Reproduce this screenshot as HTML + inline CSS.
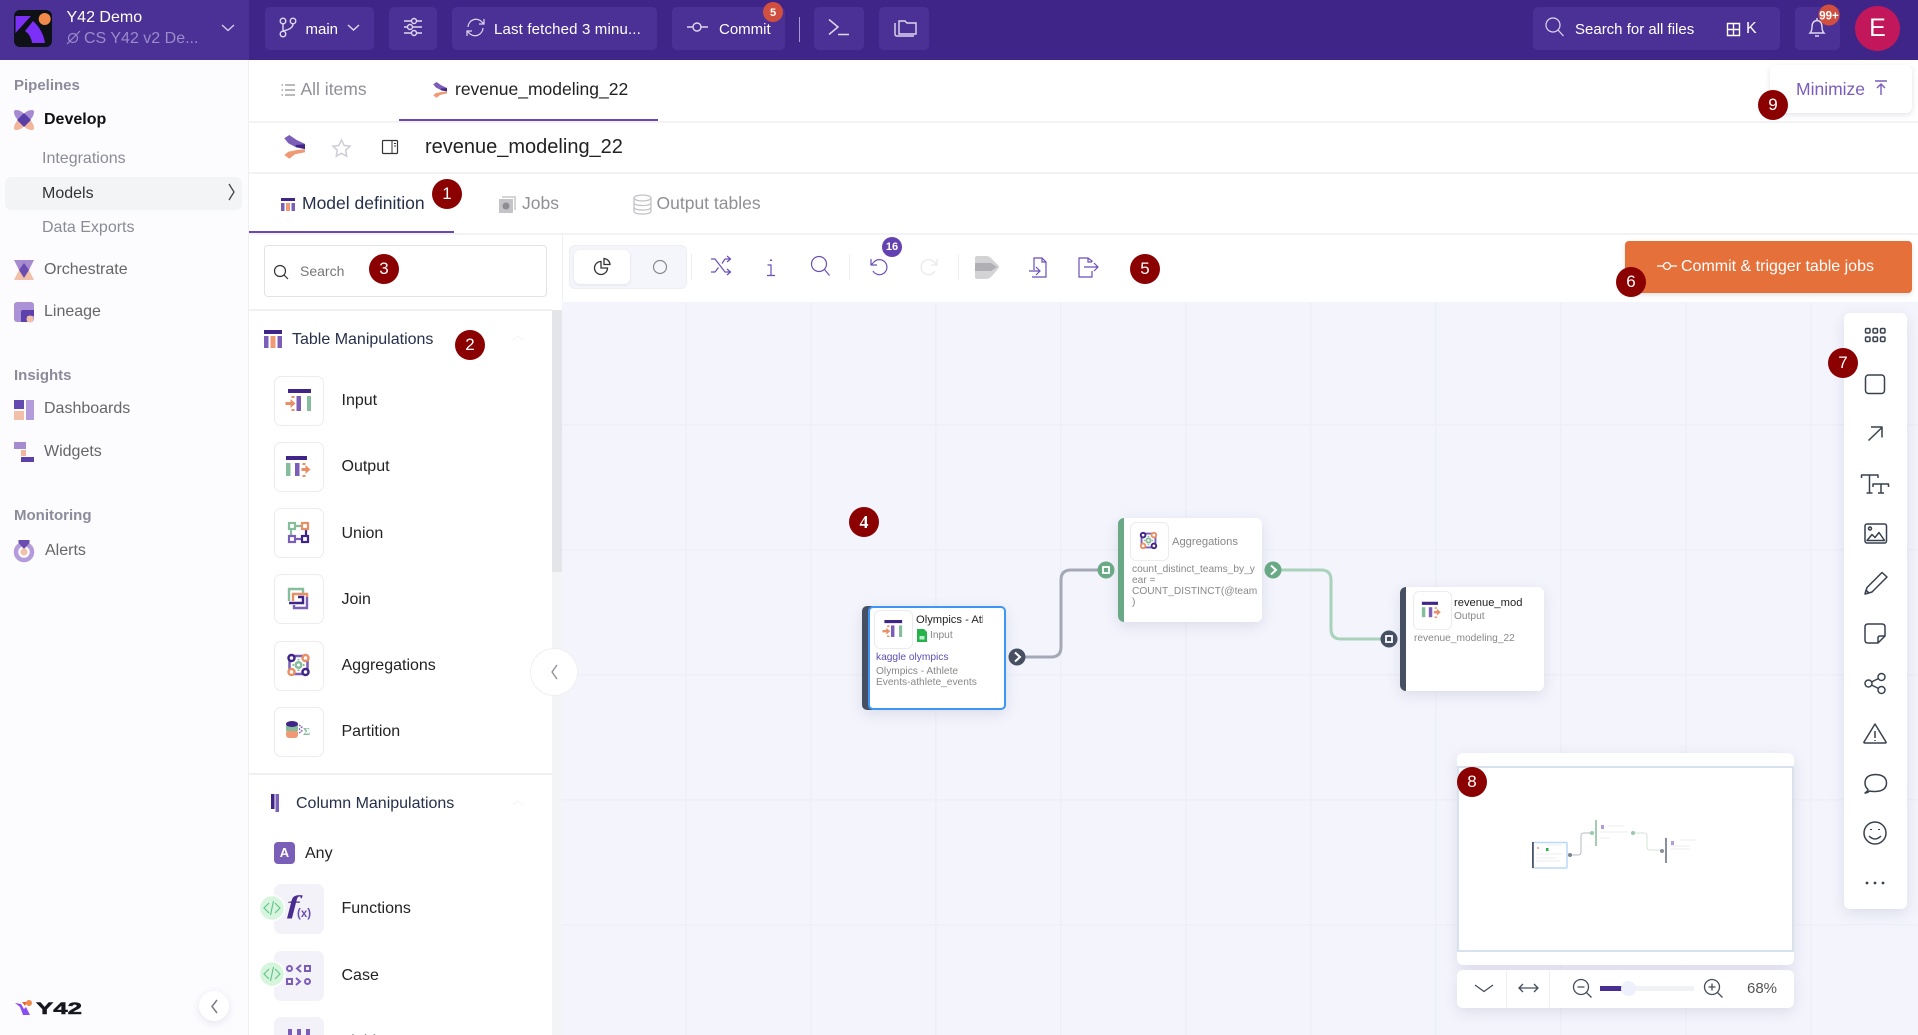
<!DOCTYPE html>
<html lang="en"><head><meta charset="utf-8"><title>Y42</title>
<style>
html,body{margin:0;padding:0;width:1918px;height:1035px;overflow:hidden;background:#fff;font-family:"Liberation Sans",sans-serif;color:#222}
#w{position:absolute;left:0;top:0;width:1918px;height:1035px;overflow:hidden;contain:paint}
.a{position:absolute;box-sizing:border-box}
.t{position:absolute;white-space:nowrap;line-height:20px;height:20px}
.btn{position:absolute;top:7px;height:43px;background:#4b3196;border-radius:5px}
.box{position:absolute;left:274px;width:48px;height:48px;border:1px solid #ececf0;border-radius:7px;background:#fff}
.n{position:absolute;width:30px;height:30px;border-radius:50%;background:#8b0000;color:#fff;font:17px/30px "Liberation Sans",sans-serif;text-align:center;z-index:9}
.s15{font-size:15px;color:#fff}
.s16{font-size:16px}
.g{color:#8b8b95}
.card{position:absolute;background:#fff;border-radius:6px;box-shadow:0 4px 14px rgba(60,60,110,.12)}
.nt{position:absolute;white-space:nowrap;font-size:10.2px;line-height:11px;color:#888}
.ib{position:absolute;width:37px;height:37px;border:1px solid #ececf0;border-radius:6px;background:#fff}
</style></head><body><div id="w">
<!-- top bar -->
<div class="a" style="left:0;top:0;width:1918px;height:60px;background:#3f2587"></div>
<div class="a" style="left:0;top:0;width:249px;height:60px;background:#4b3196"></div>
<div class="btn" style="left:265px;width:109px"></div>
<div class="btn" style="left:389px;width:48px"></div>
<div class="btn" style="left:452px;width:205px"></div>
<div class="btn" style="left:672px;width:113px"></div>
<div class="a" style="left:799px;top:17px;width:1px;height:25px;background:#a99bd2"></div>
<div class="btn" style="left:814px;width:50px"></div>
<div class="btn" style="left:879px;width:50px"></div>
<div class="btn" style="left:1533px;width:247px"></div>
<div class="btn" style="left:1795px;width:45px"></div>
<div class="a" style="left:1855px;top:6px;width:45px;height:45px;border-radius:50%;background:#c2185b;color:#fff;font-size:25px;line-height:45px;text-align:center">E</div>
<div class="t s16" style="left:66.5px;top:8px;color:#fff">Y42 Demo</div>
<div class="t s16" style="left:84px;top:29px;color:#9a8bca">CS Y42 v2 De...</div>
<div class="t s15" style="left:305.5px;top:20px">main</div>
<div class="t s15" style="left:494px;top:20px;letter-spacing:.16px">Last fetched 3 minu...</div>
<div class="t s15" style="left:719px;top:20px">Commit</div>
<div class="t s15" style="left:1575px;top:20px">Search for all files</div>
<div class="t s16" style="left:1746px;top:19px;color:#fff">K</div>
<!-- sidebar -->
<div class="a" style="left:0;top:60px;width:249px;height:975px;background:#fcfcff;border-right:1px solid #f0f0f4"></div>
<div class="a" style="left:5px;top:177px;width:237px;height:33px;background:#f3f4f6;border-radius:6px"></div>
<div class="t" style="left:14px;top:76px;font-size:15px;font-weight:700;color:#8b8b9b">Pipelines</div>
<div class="t s16" style="left:44px;top:110px;font-weight:700;color:#111">Develop</div>
<div class="t s16 g" style="left:42px;top:149px">Integrations</div>
<div class="t s16" style="left:42px;top:184px;color:#333">Models</div>
<div class="t s16 g" style="left:42px;top:218px">Data Exports</div>
<div class="t s16" style="left:44px;top:260px;color:#666">Orchestrate</div>
<div class="t s16" style="left:44px;top:302px;color:#666">Lineage</div>
<div class="t" style="left:14px;top:366px;font-size:15px;font-weight:700;color:#8b8b9b">Insights</div>
<div class="t s16" style="left:44px;top:399px;color:#666">Dashboards</div>
<div class="t s16" style="left:44px;top:442px;color:#666">Widgets</div>
<div class="t" style="left:14px;top:506px;font-size:15px;font-weight:700;color:#8b8b9b">Monitoring</div>
<div class="t s16" style="left:45px;top:541px;color:#666">Alerts</div>
<div class="a" style="left:199px;top:991px;width:30px;height:30px;border-radius:50%;background:#fff;box-shadow:0 2px 8px rgba(60,60,110,.12)"></div>
<!-- tabs rows -->
<div class="a" style="left:249px;top:121px;width:1669px;height:2px;background:#f3f3f6"></div>
<div class="a" style="left:249px;top:172px;width:1669px;height:2px;background:#f3f3f6"></div>
<div class="a" style="left:249px;top:233px;width:1669px;height:2px;background:#f3f3f6"></div>
<div class="a" style="left:399px;top:119px;width:259px;height:2px;background:#6b46b5"></div>
<div class="a" style="left:249px;top:231px;width:205px;height:2px;background:#6b46b5"></div>
<div class="t" style="left:300.5px;top:79px;font-size:17.5px;color:#8f8f98">All items</div>
<div class="t" style="left:455px;top:79px;font-size:17.5px;color:#222">revenue_modeling_22</div>
<div class="t" style="left:425px;top:137px;font-size:20px;color:#222">revenue_modeling_22</div>
<div class="t" style="left:302px;top:193px;font-size:17.5px;color:#27304a">Model definition</div>
<div class="t" style="left:522px;top:193px;font-size:17.5px;color:#8f8f95">Jobs</div>
<div class="t" style="left:656.500px;top:193px;font-size:17.5px;color:#8f8f95">Output tables</div>
<div class="card" style="left:1770px;top:65px;width:142px;height:48px;box-shadow:0 2px 6px rgba(60,60,110,.14)"></div>
<div class="t" style="left:1796px;top:79px;font-size:17.5px;color:#7c5cbc">Minimize</div>
<!-- canvas -->
<div class="a" style="left:562px;top:302px;width:1356px;height:733px;background-color:#f3f4fc;background-image:linear-gradient(to right,#eeeff8 1.5px,transparent 1.5px),linear-gradient(to bottom,#eeeff8 1.5px,transparent 1.5px);background-size:125px 125px;background-position:123px -3px"></div>
<!-- toolbar -->
<div class="a" style="left:562px;top:233px;width:1px;height:69px;background:#f0f0f4"></div>
<div class="a" style="left:569px;top:245px;width:118px;height:44px;background:#f5f6fb;border:1px solid #eeeff5;border-radius:6px"></div>
<div class="a" style="left:574px;top:250px;width:56px;height:34px;background:#fff;border-radius:6px;box-shadow:0 1px 3px rgba(60,60,110,.1)"></div>
<div class="a" style="left:691px;top:254px;width:1px;height:26px;background:#eee"></div>
<div class="a" style="left:849px;top:254px;width:1px;height:26px;background:#eee"></div>
<div class="a" style="left:958px;top:254px;width:1px;height:26px;background:#eee"></div>
<div class="a" style="left:882px;top:237px;width:20px;height:20px;border-radius:50%;background:#6441b0;color:#fff;font-size:11px;font-weight:700;line-height:20px;text-align:center;z-index:6">16</div>
<div class="a" style="left:1625px;top:241px;width:287px;height:52px;background:#e5703a;border-radius:4px;box-shadow:0 2px 5px rgba(60,60,60,.15)"></div>
<div class="t s16" style="left:1681px;top:257px;color:#fff">Commit &amp; trigger table jobs</div>
<!-- left panel -->
<div class="a" style="left:552px;top:310px;width:10px;height:725px;background:#f3f4f6"></div>
<div class="a" style="left:552px;top:310px;width:10px;height:262px;background:#e4e5e9"></div>
<div class="a" style="left:249px;top:309px;width:303px;height:2px;background:#f1f1f5"></div>
<div class="a" style="left:264px;top:245px;width:283px;height:52px;border:1px solid #e3e3e6;border-radius:4px;background:#fff"></div>
<div class="t" style="left:300px;top:261px;font-size:14px;color:#777">Search</div>
<div class="t s16" style="left:292px;top:330px;color:#27304a">Table Manipulations</div>
<div class="box" style="top:376px"></div><div class="t s16" style="left:341.5px;top:391px">Input</div>
<div class="box" style="top:442px"></div><div class="t s16" style="left:341.5px;top:457px">Output</div>
<div class="box" style="top:508px"></div><div class="t s16" style="left:341.5px;top:524px">Union</div>
<div class="box" style="top:574px"></div><div class="t s16" style="left:341.5px;top:590px">Join</div>
<div class="box" style="top:641px"></div><div class="t s16" style="left:341.5px;top:656px">Aggregations</div>
<div class="box" style="top:707px"></div><div class="t s16" style="left:341.5px;top:722px">Partition</div>
<div class="a" style="left:249px;top:773px;width:303px;height:2px;background:#f0f0f4"></div>
<div class="t s16" style="left:296px;top:794px;color:#27304a">Column Manipulations</div>
<div class="a" style="left:274px;top:842px;width:21px;height:22px;border-radius:4px;background:#7b5eb8;color:#fff;font-size:13px;font-weight:700;line-height:22px;text-align:center">A</div>
<div class="t s16" style="left:305px;top:844px">Any</div>
<div class="box" style="top:884px;background:#f4f2f9;border-color:#f4f2f9"></div><div class="t s16" style="left:341.5px;top:899px">Functions</div>
<div class="box" style="top:951px;background:#f4f2f9;border-color:#f4f2f9"></div><div class="t s16" style="left:341.5px;top:966px">Case</div>
<div class="box" style="top:1017px;background:#f4f2f9;border-color:#f4f2f9"></div><div class="t s16" style="left:341.5px;top:1032px">Fields</div>
<div class="a" style="left:530px;top:648px;width:48px;height:48px;border-radius:50%;background:#fff;border:1px solid #f0f0f4;z-index:2"></div>
<!-- nodes -->
<div class="card" style="left:862px;top:606px;width:144px;height:104px"></div>
<div class="a" style="left:862px;top:606px;width:10px;height:104px;background:#475063;border-radius:5px 0 0 5px"></div>
<div class="a" style="left:868px;top:606px;width:138px;height:104px;border:2px solid #3d95f5;border-radius:5px;background:#fff"></div>
<div class="ib" style="left:874px;top:610px"></div>
<div class="a" style="left:916px;top:613px;width:67px;height:15px;overflow:hidden;white-space:nowrap;font-size:11.2px;line-height:15px;color:#222">Olympics - Athlete Events</div>
<div class="nt" style="left:930px;top:630px;color:#888">Input</div>
<div class="nt" style="left:876px;top:652px;color:#5b4fb0">kaggle olympics</div>
<div class="nt" style="left:876px;top:666px">Olympics - Athlete</div>
<div class="nt" style="left:876px;top:677px">Events-athlete_events</div>
<div class="card" style="left:1118px;top:518px;width:144px;height:104px;overflow:hidden"><div class="a" style="left:0;top:0;width:6px;height:104px;background:#6aa985"></div></div>
<div class="ib" style="left:1130px;top:522px"></div>
<div class="t" style="left:1172px;top:532px;font-size:11.2px;color:#888">Aggregations</div>
<div class="nt" style="left:1132px;top:564px">count_distinct_teams_by_y</div>
<div class="nt" style="left:1132px;top:575px">ear =</div>
<div class="nt" style="left:1132px;top:586px">COUNT_DISTINCT(@team</div>
<div class="nt" style="left:1132px;top:597px">)</div>
<div class="card" style="left:1400px;top:587px;width:144px;height:104px;overflow:hidden"><div class="a" style="left:0;top:0;width:6px;height:104px;background:#475063"></div></div>
<div class="ib" style="left:1413px;top:591px"></div>
<div class="a" style="left:1454px;top:596px;width:68px;height:15px;overflow:hidden;white-space:nowrap;font-size:11.2px;line-height:15px;color:#222">revenue_modeling_22</div>
<div class="nt" style="left:1454px;top:611px">Output</div>
<div class="nt" style="left:1414px;top:633px">revenue_modeling_22</div>
<!-- minimap -->
<div class="card" style="left:1457px;top:753px;width:337px;height:212px"></div>
<div class="a" style="left:1457px;top:766px;width:337px;height:186px;border:2px solid #d8e2ec;background:#fff"></div>
<div class="card" style="left:1457px;top:970px;width:337px;height:38px"></div>
<div class="a" style="left:1506px;top:970px;width:1px;height:38px;background:#f0f0f4"></div>
<div class="a" style="left:1549px;top:970px;width:1px;height:38px;background:#f0f0f4"></div>
<div class="a" style="left:1600px;top:986px;width:94px;height:5px;background:#f1f2f6"></div>
<div class="a" style="left:1600px;top:986px;width:22px;height:5px;background:#4a2d90"></div>
<div class="a" style="left:1621px;top:981px;width:15px;height:15px;border-radius:50%;background:#eef0fb"></div>
<div class="t" style="left:1747px;top:979px;font-size:15px;color:#555">68%</div>
<!-- right toolbar -->
<div class="card" style="left:1844px;top:313px;width:63px;height:596px"></div>

<svg class="a" style="left:0;top:0;z-index:5" width="1918" height="1035" viewBox="0 0 1918 1035" fill="none">
<defs>
<symbol id="in" viewBox="0 0 48 48"><path fill="#3f2587" d="M13.500 13h23v4h-23z"/><path fill="#7b5eb8" d="M22 20h4.500v15H22z"/><path fill="#86bd9c" d="M32.500 20h4v15h-4z"/><path fill="#e98f66" d="M11 26h5v-3l5 4.500-5 4.500v-3h-5zM17 20h3v2h-3zM17 33h3v2h-3z"/></symbol>
<symbol id="out" viewBox="0 0 48 48"><path fill="#3f2587" d="M11.500 14h21v4h-21z"/><path fill="#86bd9c" d="M11.500 21H16v13h-4.500z"/><path fill="#7b5eb8" d="M20.500 21H25v13h-4.500z"/><path fill="#e98f66" d="M27 26h4v-3l5 4.500-5 4.500v-3h-4zM28 21h3v2h-3zM28 33h3v2h-3z"/></symbol>
<symbol id="agg" viewBox="0 0 48 48"><rect x="15" y="15" width="18" height="18" rx="4" stroke="#7b5eb8" stroke-width="2.500"/><circle cx="24" cy="24" r="2.800" stroke="#86bd9c" stroke-width="2.500"/><path d="M24 18v1.500M24 28.500V30M18 24h1.500M28.500 24H30" stroke="#86bd9c" stroke-width="2"/><circle cx="17" cy="17" r="3" stroke="#3f2587" stroke-width="2.500" fill="#fff"/><circle cx="31" cy="17" r="3" stroke="#e98f66" stroke-width="2.500" fill="#fff"/><circle cx="17" cy="31" r="3" stroke="#e98f66" stroke-width="2.500" fill="#fff"/><circle cx="31" cy="31" r="3" stroke="#3f2587" stroke-width="2.500" fill="#fff"/></symbol>
<symbol id="model" viewBox="0 0 21 24"><path fill="#7b5eb8" d="M.3 3.300 5.300 0l7.400 5 8.300 4v5.300l-10-2.600-6.700-3.400z"/><path fill="#ef9a72" d="M21 14.300l-8.300.7-8.400 1.700-4 3.300 5 3.700 5.700-4.400 10-2z"/><path fill="#3f2587" d="M11.700 10 21 9.300V14l-9.300-1.700z"/></symbol>
</defs>
<!-- logo -->
<rect x="14" y="10" width="38" height="37" rx="6" fill="#0e1116"/>
<path fill="#7b2ff7" d="M15.500 16H31L15.500 33zM25 31l8-10q10 9 12 22H32q-1-8-7-12z"/>
<circle cx="44.700" cy="19" r="6" fill="#ef8a4a"/>
<g stroke="#9a8bca" stroke-width="1.200"><ellipse cx="73" cy="38" rx="4.500" ry="4.500"/><path d="M67 44 80 31" /></g>
<path d="M222 25l6 5.500 6-5.500" stroke="#d9d2ee" stroke-width="1.300"/>
<!-- branch -->
<g stroke="#ded8f0" stroke-width="1.400"><circle cx="283" cy="21" r="2.800"/><circle cx="293" cy="21" r="2.800"/><circle cx="283" cy="34" r="2.800"/><path d="M283 24v7M293 24q0 5-10 7"/>
<path d="M348 25l5.500 5 5.500-5"/>
<path d="M404 21h7M417 21h5M404 27h3M413 27h9M404 33h7M417 33h5"/><circle cx="414" cy="21" r="2.500"/><circle cx="410" cy="27" r="2.500"/><circle cx="414" cy="33" r="2.500"/>
<path d="M468 27a8 8 0 0 1 14-5l2 2M484 19v5h-5M483 28a8 8 0 0 1-14 5l-2-2M467 36v-5h5" stroke-width="1.200"/>
<path d="M687 27h6M701 27h7"/><circle cx="697" cy="27" r="4"/>
<path d="M829 19.500 838 27l-9 7.500M838 34.500h11" stroke-width="1.500"/>
<path d="M899 30V21h6l2 2h9v11h-17z"/><path d="M895 23v11q0 2 2 2h17"/>
<circle cx="1553" cy="25" r="7" stroke-width="1.200"/><path d="M1558 30l5.500 6" stroke-width="1.200"/>
<path d="M1727.500 23.500h12v12h-12zM1733.500 23.500v12M1727.500 29.500h12" stroke="#fff"/>
<path d="M1810 33h14q-2-2-2-6 0-6-5-6.500-5 .5-5 6.500 0 4-2 6zM1815 36h4M1817 18v2.500"/></g>
<circle cx="773" cy="12" r="10" fill="#d04f3e"/>
<text x="773" y="16" font-family="Liberation Sans" font-size="11" font-weight="700" fill="#fff" text-anchor="middle">5</text>
<circle cx="1829" cy="15" r="10.500" fill="#d04f3e"/>
<text x="1829" y="19.500" font-family="Liberation Sans" font-size="11.500" font-weight="700" fill="#fff" text-anchor="middle">99+</text>
<!-- sidebar icons -->
<path fill="#a78bd1" d="M14 112q0-2 2-2 5 0 8 4 3-4 8-4 2 0 2 2 0 4-4 8l-6-6-6 6q-4-4-4-8z"/>
<path fill="#f2b69a" d="M14 128q0 2 2 2 5 0 8-4 3 4 8 4 2 0 2-2 0-4-4-8l-6 6-6-6q-4 4-4 8z"/>
<path fill="#5a3ea8" d="M24 113l7 7-7 7-7-7z"/>
<path fill="#a78bd1" d="M14 260h20l-5 10H19z"/><path fill="#f2c0a8" d="M14 280h20l-5-10H19z"/><path fill="#6b4cb0" d="M24 263l5 7-5 8-5-8z"/>
<rect x="14" y="302" width="20" height="20" rx="3" fill="#ab92d6"/><path fill="#5e40ab" d="M21 322v-10q0-2 2-2h11v6h-7v6z"/><circle cx="30" cy="319" r="3.500" fill="#f2c0a8"/>
<path fill="#624ab0" d="M14 400h10v9H14z"/><path fill="#f2c0a8" d="M14 411h10v9H14z"/><path fill="#b39bdc" d="M26 400h8v20h-8z"/>
<path fill="#a78bd1" d="M14 442h12v7H14z"/><path fill="#f2b69a" d="M21 450h5v6h-5z"/><path fill="#5e40ab" d="M21 457h13v5H21z"/>
<circle cx="24" cy="552" r="8" stroke="#b39bdc" stroke-width="4.500"/><path fill="#6b4cb0" d="M18.500 540h11v3L24 549l-5.500-6z"/><circle cx="24" cy="552" r="3.500" fill="#f2c0a8"/>
<path d="M229 184l5 8-5 8" stroke="#444" stroke-width="1.300"/>
<path d="M217 1000l-5 6.500 5 6.500" stroke="#7a7a88" stroke-width="1.500"/>
<path fill="#8b4ff0" d="M15 1003l6 1 3 5 2-2 4 8h-7l-3-8z"/><path fill="#e8652a" d="M22 1002l5 0-2 4z"/><circle cx="29" cy="1003" r="3" fill="#ef8a4a"/>
<text x="36" y="1014" font-family="Liberation Sans" font-size="17" font-weight="700" fill="#17171f" stroke="#17171f" stroke-width=".5" textLength="46" lengthAdjust="spacingAndGlyphs">Y42</text>
<!-- tab icons -->
<g stroke="#8f8f98" stroke-width="1.300"><path d="M285 85h10M285 90h10M285 95h10M281.500 85h1.500M281.500 90h1.500M281.500 95h1.500"/></g>
<use href="#model" x="433" y="82" width="14" height="16"/>
<use href="#model" x="284" y="135" width="21" height="24"/>
<path d="M341.500 140l2.600 5.400 5.900.8-4.300 4.100 1 5.900-5.200-2.800-5.200 2.800 1-5.900-4.300-4.100 5.900-.8z" stroke="#cdcdd6" stroke-width="1.500"/>
<rect x="382.500" y="140.500" width="15" height="13" rx="1" stroke="#333" stroke-width="1.200"/><path d="M392 140.500v13M394 143.500h2M394 146h2" stroke="#333"/>
<path fill="#3f2587" d="M281 198h14v3h-14z"/><path fill="#7b5eb8" d="M281 203h3.500v8H281zM291.500 203h3.500v8h-3.500z"/><path fill="#ef9a72" d="M286 203h4v8h-4z"/>
<rect x="499" y="199" width="14" height="14" fill="#c4c4c8"/><path d="M502 196h14v14h-2v-12h-12z" fill="#d5d5d8"/><circle cx="506" cy="206" r="3.500" fill="#8c8c92"/>
<g stroke="#c2c2c8" stroke-width="1.300"><ellipse cx="642.500" cy="198" rx="8.500" ry="3"/><path d="M634 198v13q0 3 8.500 3t8.500-3v-13M634 202.500q0 3 8.500 3t8.500-3M634 207q0 3 8.500 3t8.500-3"/></g>
<path d="M1875 81h12M1881 95V84.500M1877 88l4-4 4 4" stroke="#7c5cbc" stroke-width="1.400"/>
<!-- search + toolbar -->
<circle cx="280" cy="271" r="5.500" stroke="#333" stroke-width="1.200"/><path d="M284 275l4 4" stroke="#333" stroke-width="1.200"/>
<g stroke="#333" stroke-width="1.300"><path d="M601 261.500A6.500 6.500 0 1 0 607.500 268H601Z"/><path d="M604 258.500A6.500 6.500 0 0 1 610 264.500H604Z"/></g>
<circle cx="660" cy="267" r="6.500" stroke="#8a8a92" stroke-width="1.200"/>
<g stroke="#6b4fb8" stroke-width="1.200">
<path d="M711 259h4l10 13h5M711 272h4l3.500-4.500M722 263.500l3-4.500h5M727 256l3.500 3-3.500 3M727 269l3.500 3-3.500 3"/>
<path d="M771 259.500v1.500" stroke-width="2"/><path d="M767.500 265h3.500v10.500M767 275.500h8"/>
<circle cx="819" cy="264" r="7.500"/><path d="M824.500 269.500l5 6"/>
<path d="M871 259v6h6M871 265L874 262A7.500 7.500 0 1 1 873 271"/>
<path d="M1032 277h14v-15l-4-4h-8v12M1042 258v4h4M1029 271h11M1036 267l4 4-4 4"/>
<path d="M1092 262v-1l-4-3h-9v19h13v-6M1088 258v4h4M1084 267h14M1094 263l4 4-4 4"/>
</g>
<path d="M871 259v6h6M871 265L874 262A7.500 7.500 0 1 1 873 271" stroke="#e9e9ee" stroke-width="1.300" transform="matrix(-1 0 0 1 1808 0)"/>
<path d="M977 256h9q3 0 5 2l7 7q2 2 0 4l-7 8q-2 2-5 2h-9q-2 0-2-2v-19q0-2 2-2z" fill="#d3d3d6"/><path d="M975 263h16l6 4-6 4h-16z" fill="#b0b0b4"/>
<path d="M1657 266h6M1671 266h6" stroke="#fff" stroke-width="1.300"/><circle cx="1667" cy="266" r="3.500" stroke="#fff" stroke-width="1.300"/>
<!-- section icons -->
<path fill="#3f2587" d="M264 330h18v4h-18z"/><path fill="#7b5eb8" d="M264 336h4.500v12H264zM277.500 336h4.500v12h-4.500z"/><path fill="#ef9a72" d="M270.500 336h5v12h-5z"/>
<path d="M513 340l5-4 5 4M513 805l5-4 5 4" stroke="#f6f6f9" stroke-width="1.300"/>
<path fill="#3f2587" d="M271 794h3.500v15H271z"/><path fill="#7b5eb8" d="M275.500 794h3.500v18h-3.500z"/>
<use href="#in" x="274.500" y="376" width="48" height="48"/>
<use href="#out" x="274.500" y="442" width="48" height="48"/>
<use href="#agg" x="274.500" y="641" width="48" height="48"/>
<!-- union -->
<g stroke-width="2.200"><path d="M291 526h15" stroke="#86bd9c"/><path d="M291 539h15" stroke="#7b5eb8"/><path d="M291 526v13" stroke="#86bd9c"/><path d="M306 526v13" stroke="#3f2587"/>
<rect x="289" y="523" width="6" height="6" stroke="#86bd9c" fill="#fff"/><rect x="302" y="523" width="6" height="6" stroke="#e98f66" fill="#fff"/><rect x="289" y="536" width="6" height="6" stroke="#7b5eb8" fill="#fff"/><rect x="302" y="536" width="6" height="6" stroke="#3f2587" fill="#fff"/></g>
<!-- join -->
<g stroke-width="2.400"><path d="M289 601v-12h14v4" stroke="#86bd9c"/><path d="M293 601v-7h14v3" stroke="#e98f66"/><path d="M289 603h14v-6h-5" stroke="#3f2587"/><path d="M307 597v11h-13v-3" stroke="#7b5eb8"/></g>
<!-- partition -->
<rect x="286" y="730" width="12" height="8" rx="3" fill="#ef9a72"/><rect x="286" y="725" width="12" height="6" fill="#86bd9c"/><ellipse cx="292" cy="724" rx="6" ry="3" fill="#3f2587"/>
<path d="M299 725l3 2-3 2M299 733l3-2-3-2" stroke="#7b5eb8" stroke-width="1.200" stroke-dasharray="2 1"/>
<text x="303" y="735" font-family="Liberation Serif" font-size="11" font-weight="700" fill="#86bd9c">Σ</text>
<!-- f(x) -->
<text transform="translate(287 913) scale(1.5 1)" font-family="Liberation Serif" font-size="25" font-weight="700" font-style="italic" fill="#4a2d90">f</text>
<text x="297" y="917" font-family="Liberation Sans" font-size="11.500" font-weight="700" fill="#6a4db0">(x)</text>
<circle cx="272" cy="908" r="12.500" fill="#d6f5dc" stroke="#fff" stroke-width="1.500"/><circle cx="272" cy="974" r="12.500" fill="#d6f5dc" stroke="#fff" stroke-width="1.500"/>
<g stroke="#5fc38a" stroke-width="1.100"><path d="M269 903l-5 5 5 5M275 903l5 5-5 5M273.500 901l-3 14M269 969l-5 5 5 5M275 969l5 5-5 5M273.500 967l-3 14"/></g>
<g stroke="#7b5eb8" stroke-width="2"><circle cx="289.500" cy="968.500" r="2.500"/><rect x="305" y="966" width="5" height="5"/><rect x="287" y="979" width="5" height="5"/><circle cx="307.500" cy="981.500" r="2.500"/><path d="M301 965l-4 3.500 4 3.500M296 978l4 3.500-4 3.500"/></g>
<path fill="#7b5eb8" d="M288 1029h4v6h-4zM297 1029h4v6h-4zM306 1029h4v6h-4z"/>
<path d="M557 665l-5 7 5 7" stroke="#8a8a95" stroke-width="1.300"/>
<!-- edges -->
<path d="M1017 657H1051Q1061 657 1061 647V580Q1061 570 1071 570H1106" stroke="#a5a9b7" stroke-width="3"/>
<path d="M1273 570H1321Q1331 570 1331 580V629Q1331 639 1341 639H1389" stroke="#aad2ba" stroke-width="3"/>
<!-- node icons -->
<use href="#in" x="874" y="610" width="37" height="37"/>
<use href="#agg" x="1130" y="522" width="37" height="37"/>
<use href="#out" x="1413" y="591" width="37" height="37"/>
<path fill="#27b34c" d="M917 629h7l3 3v10h-10z"/><path fill="#bdeccb" d="M919.500 636h5v3.500h-5z"/>
<circle cx="1017" cy="657" r="8.500" fill="#475063"/><path d="M1015 652.500l5 4.500-5 4.500" stroke="#fff" stroke-width="2"/>
<circle cx="1106" cy="570" r="8.500" fill="#6aa985"/><rect x="1103" y="567" width="6" height="6" stroke="#fff" stroke-width="1.800"/>
<circle cx="1273" cy="570" r="8.500" fill="#6aa985"/><path d="M1271 565.500l5 4.500-5 4.500" stroke="#fff" stroke-width="2"/>
<circle cx="1389" cy="639" r="8.500" fill="#475063"/><rect x="1386" y="636" width="6" height="6" stroke="#fff" stroke-width="1.800"/>
<!-- minimap content -->
<rect x="1533" y="842.500" width="34" height="25.500" rx="1" stroke="#bcd8f9" stroke-width="1.500" fill="#fff"/>
<path fill="#4a5570" d="M1532 842h1.800v26H1532z"/>
<path d="M1572 855H1578Q1581 855 1581 852V836Q1581 833 1584 833H1592" stroke="#b5b9c4"/>
<path d="M1635 833H1644Q1647 833 1647 836V847Q1647 850 1650 850H1660" stroke="#cfe5d7"/>
<circle cx="1570" cy="855" r="2" fill="#7d8290"/><circle cx="1592" cy="833" r="2" fill="#9cc7ac"/><circle cx="1633" cy="833" r="2" fill="#9cc7ac"/><circle cx="1662" cy="851" r="2" fill="#8a8f9d"/>
<path fill="#a3cdb2" d="M1595 820h2v26h-2z"/><path fill="#8a8f9d" d="M1665 838h2v25h-2z"/>
<g stroke="#eceef2" stroke-width="1"><path d="M1546 845h16M1536 854h26M1536 858h20M1536 861h24M1608 826h16M1600 832h28M1600 838h10M1680 840h16M1670 846h20M1670 849h20"/></g>
<circle cx="1538" cy="848" r="1" fill="#ef9a72"/><path fill="#27b34c" d="M1546 848h2.500v3h-2.500z"/><path fill="#b39bdc" d="M1601 825h3v4h-3zM1671 841h3v4h-3z"/>
<!-- minimap controls -->
<g stroke="#454c5e" stroke-width="1.300"><path d="M1475 985l9 6.500 9-6.500"/><path d="M1519 988h19M1523 984l-4 4 4 4M1534 984l4 4-4 4"/>
<circle cx="1581" cy="987" r="7.500"/><path d="M1577.500 987h7M1586.500 992.500l5 5"/>
<circle cx="1712" cy="987" r="7.500"/><path d="M1708.500 987h7M1712 983.500v7M1717.500 992.500l5 5"/></g>
<!-- right toolbar icons -->
<g stroke="#39404f" stroke-width="1.500" stroke-linejoin="round">
<rect x="1865.500" y="328.500" width="4.500" height="4.500" rx="1.200"/><rect x="1873" y="328.500" width="4.500" height="4.500" rx="1.200"/><rect x="1880.500" y="328.500" width="4.500" height="4.500" rx="1.200"/>
<rect x="1865.500" y="337" width="4.500" height="4.500" rx="1.200"/><rect x="1873" y="337" width="4.500" height="4.500" rx="1.200"/><rect x="1880.500" y="337" width="4.500" height="4.500" rx="1.200"/>
<rect x="1865.500" y="375" width="19" height="18.500" rx="3"/>
<path d="M1868.500 440.500l13.500-13M1871 427h11v10.500"/>
<path d="M1861.500 478v-3h16.500v3M1869.500 475v18M1866.500 493h6M1873 487v-3h15.500v3M1881 484v9M1878 493h6"/>
<rect x="1865" y="524" width="21.500" height="19" rx="2"/><path d="M1867 540.500l5-6 3 3 4-5 5.500 8z"/><circle cx="1870" cy="528.500" r="1.500"/>
<path d="M1865 594l2-6.500 15-15 5 4.500-15 15zM1865 594l1-4 3 3z"/>
<path d="M1868 624h14q3 0 3 3v9l-7 7h-10q-3 0-3-3v-13q0-3 3-3zM1878 643v-5q0-2 2-2h5"/>
<circle cx="1868.500" cy="683.500" r="3.500"/><circle cx="1881.500" cy="677" r="3.500"/><circle cx="1881.500" cy="690" r="3.500"/><path d="M1871.500 682l7-3.500M1871.500 685l7 3.500"/>
<path d="M1875 724l11 18q.5 1-1 1h-20q-1.500 0-1-1z"/><path d="M1875 731v7M1875 740v1"/>
<path d="M1865 793q3-2 3-3.500-3-2.500-3-6.500 0-8 10.500-8.500Q1886.500 775 1886.500 783t-11 8.500q-4 0-6-.5-2 2-4.500 2z"/>
<circle cx="1875" cy="833" r="11"/><path d="M1869 836q6 6 12 0"/><path d="M1871 829v1M1879 829v1" stroke-width="2"/>
</g>
<g fill="#39404f"><circle cx="1867" cy="883" r="1.400"/><circle cx="1875" cy="883" r="1.400"/><circle cx="1883" cy="883" r="1.400"/></g>
</svg>
<div class="n" style="left:432px;top:179px">1</div>
<div class="n" style="left:455px;top:330px">2</div>
<div class="n" style="left:369px;top:254px">3</div>
<div class="n" style="left:849px;top:507px;font:bold 18px/30px 'Liberation Serif',serif">4</div>
<div class="n" style="left:1130px;top:254px">5</div>
<div class="n" style="left:1616px;top:267px">6</div>
<div class="n" style="left:1828px;top:348px">7</div>
<div class="n" style="left:1457px;top:767px">8</div>
<div class="n" style="left:1758px;top:90px">9</div>
</div></body></html>
